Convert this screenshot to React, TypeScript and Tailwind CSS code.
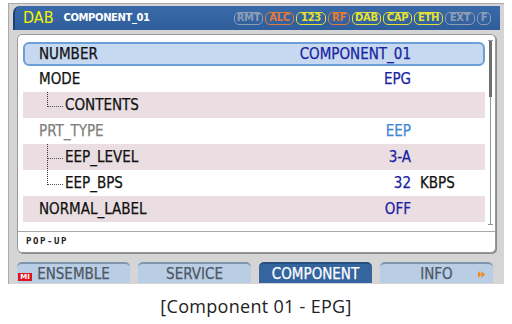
import React from "react";

const narrow = "font-['Liberation_Sans_Narrow','DejaVu_Sans_Condensed','Arial_Narrow',sans-serif]";

type Row = {
  label: string;
  value?: string;
  unit?: string;
  sel?: boolean;
  pink?: boolean;
  dim?: boolean;
  tree?: "end" | "mid";
};

const rows: Row[] = [
  { label: "NUMBER", value: "COMPONENT_01", sel: true },
  { label: "MODE", value: "EPG" },
  { label: "CONTENTS", pink: true, tree: "end" },
  { label: "PRT_TYPE", value: "EEP", dim: true },
  { label: "EEP_LEVEL", value: "3-A", pink: true, tree: "mid" },
  { label: "EEP_BPS", value: "32", unit: "KBPS", tree: "end" },
  { label: "NORMAL_LABEL", value: "OFF", pink: true },
];

const badges: { t: string; w: string; c: string }[] = [
  { t: "RMT", w: "w-[29px]", c: "border-[#8e9db6] text-[#8e9db6]" },
  { t: "ALC", w: "w-[29px]", c: "border-[#e37b34] text-[#e37b34]" },
  { t: "123", w: "w-[30px]", c: "border-[#e6e030] text-[#e6e030]" },
  { t: "RF", w: "w-[22px]", c: "border-[#e37b34] text-[#e37b34]" },
  { t: "DAB", w: "w-[29px]", c: "border-[#e6e030] text-[#e6e030]" },
  { t: "CAP", w: "w-[29px]", c: "border-[#e6e030] text-[#e6e030]" },
  { t: "ETH", w: "w-[29px]", c: "border-[#e6e030] text-[#e6e030]" },
  { t: "EXT", w: "w-[30px]", c: "border-[#8e9db6] text-[#8e9db6]" },
  { t: "F", w: "w-[14px]", c: "border-[#8e9db6] text-[#8e9db6]" },
];

function Tree({ kind }: { kind: "end" | "mid" }) {
  return (
    <svg width="18" height="26" className="shrink-0">
      <line
        x1="0.5"
        y1="0"
        x2="0.5"
        y2={kind === "mid" ? 26 : 15}
        stroke="#333"
        strokeWidth="1"
        strokeDasharray="1 1"
      />
      <line x1="1" y1="14.5" x2="17" y2="14.5" stroke="#555" strokeWidth="1" strokeDasharray="1 1" />
    </svg>
  );
}

function ListRow({ r }: { r: Row }) {
  const base = r.sel
    ? "h-[24px] border-2 border-[#6a9fd8] rounded-[6px] bg-[#c6d9f1] pl-[14px]"
    : `h-[26px] ${r.pink ? "bg-[#ebdee3]" : "bg-white"} ${r.tree ? "pl-[24px]" : "pl-[16px]"}`;
  const labelColor = r.dim ? "text-[#808080]" : "text-[#111]";
  const valueColor = r.dim ? "text-[#3f88d2]" : "text-[#1a22a2]";
  return (
    <div className={`flex items-center w-[462px] ${base} ${narrow} text-[15px] leading-none [-webkit-text-stroke:0.25px]`}>
      {r.tree && <Tree kind={r.tree} />}
      <div className={`flex-1 ${labelColor}`}>{r.label}</div>
      <div className={`text-right ${valueColor}`}>{r.value ?? ""}</div>
      <div className={`${r.sel ? "w-[72px]" : "w-[74px]"} pl-[9px] text-[#111]`}>{r.unit ?? ""}</div>
    </div>
  );
}

function Tab({ label, active, children }: { label: string; active?: boolean; children?: React.ReactNode }) {
  return (
    <div
      className={`relative flex items-center justify-center w-[113px] h-[21px] rounded-t-[5px] border-t-2 ${
        active ? "bg-[#34659f] border-[#284f80] text-white" : "bg-[#b9cde5] border-[#7f95ad] text-[#4d5864]"
      } ${narrow} text-[15px] leading-none [-webkit-text-stroke:0.25px]`}
    >
      <span className="mt-[1px]">{label}</span>
      {children}
    </div>
  );
}

export default function App() {
  return (
    <div className="w-[512px] h-[324px] bg-white overflow-hidden">
      <div className="ml-[8px] mt-[3px] w-[496px] h-[281px] bg-[#d5d5d5] border-l border-t border-[#aaaaaa] flex flex-col">
        {/* Title bar */}
        <div className="ml-[4px] mt-[2px] w-[487px] h-[24px] rounded-tl-[7px] border-l-2 border-[#1f3f6c] bg-gradient-to-b from-[#3a6aa8] to-[#2f5e9b] flex items-center">
          <span className={`ml-[8px] ${narrow} text-[16px] leading-none text-[#f2f200]`}>DAB</span>
          <span className="ml-[10px] font-['DejaVu_Sans',sans-serif] font-bold text-[10px] leading-none text-white tracking-[-0.4px]">
            COMPONENT_01
          </span>
          <div className="ml-auto mr-[9px] flex gap-[2px]">
            {badges.map((b) => (
              <div
                key={b.t}
                className={`${b.w} h-[13px] rounded-[5px] border-[1.5px] ${b.c} flex items-center justify-center font-['DejaVu_Sans',sans-serif] font-bold text-[10px] leading-none tracking-[-0.3px]`}
              >
                {b.t}
              </div>
            ))}
          </div>
        </div>

        {/* Panel */}
        <div className="ml-[8px] mt-[4px] w-[479px] h-[219px] bg-white border border-[#9a9a9a] rounded-[5px] shadow-[1px_1px_0_#8a8a8a] flex flex-col">
          <div className="flex pt-[7px] pl-[5px]">
            <div className="flex flex-col">
              {rows.map((r) => (
                <ListRow key={r.label} r={r} />
              ))}
            </div>
            <div className="ml-[3px] mt-[-2px] h-[185px] w-[5px] flex flex-col items-center">
              <div className="w-[5px] h-px bg-[#8a98a8]" />
              <div className="w-[3px] h-[56px] bg-[#6e6e6e]" />
              <div className="w-px flex-1 bg-[#8797aa]" />
              <div className="w-[5px] h-px bg-[#8a98a8]" />
            </div>
          </div>
          <div className="mt-[6px] border-t border-[#a8a8a8]" />
          <div className="ml-[8px] mt-[5px] font-['DejaVu_Sans_Mono',monospace] font-bold text-[9px] leading-none tracking-[1.6px] text-[#222]">
            POP-UP
          </div>
        </div>

        {/* Tabs */}
        <div className="ml-[8px] mt-[9px] flex gap-[8px]">
          <Tab label="ENSEMBLE">
            <div className="absolute left-[1px] bottom-[2px] w-[14px] h-[8px] bg-[#e0141e] flex items-center justify-center font-['DejaVu_Sans',sans-serif] font-bold text-[7px] leading-none text-white [-webkit-text-stroke:0px]">
              MI
            </div>
          </Tab>
          <Tab label="SERVICE" />
          <Tab label="COMPONENT" active />
          <Tab label="INFO">
            <svg className="absolute right-[8px] top-[7px]" width="7" height="7" viewBox="0 0 7 7">
              <polygon points="0,0 3.5,3.5 0,7" fill="#f08a20" />
              <polygon points="3.5,0 7,3.5 3.5,7" fill="#f08a20" />
            </svg>
          </Tab>
        </div>
      </div>

      <div className="mt-[10px] text-center font-['Open_Sans',sans-serif] text-[18px] leading-[24px] tracking-[0.3px] text-[#222]">
        [Component 01 - EPG]
      </div>
    </div>
  );
}
